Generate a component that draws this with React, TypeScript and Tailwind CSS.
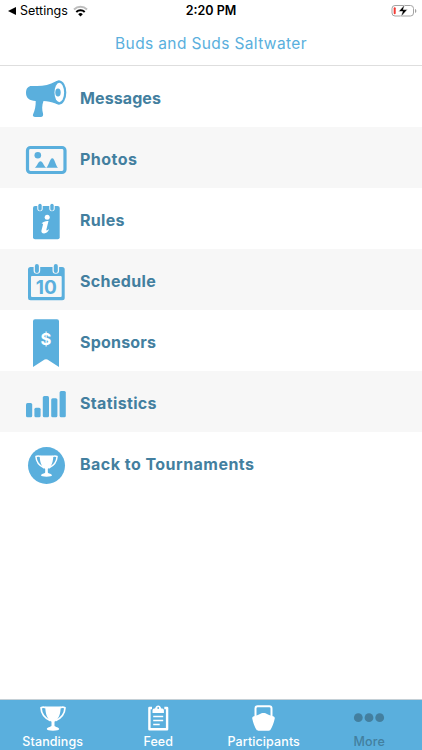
import type { ReactNode } from 'react';

const Trophy = ({ className }: { className: string }) => (
    <svg className={className} viewBox="0 0 26 25" fill="currentColor">
        <path d="M5.300.6h15.400c0 7-1.700 12.500-6.200 15.200v4c.6 1.400 4.700 1.300 4.700 3.300 0 1.200-2.500 1.600-6.200 1.600s-6.200-.4-6.200-1.600c0-2 4.100-1.900 4.700-3.300v-4C7 13.100 5.300 7.600 5.300.6z" />
        <path
            d="M6 1.600C4 1 2.500 1 1 1.700 1.200 7 3.500 11.500 10.500 14.800M20 1.600c2-.6 3.500-.6 5 .1C24.800 7 22.500 11.500 15.500 14.800"
            fill="none"
            stroke="currentColor"
            strokeWidth="1.700"
            strokeLinejoin="round"
        />
    </svg>
);

const Icon = ({ children }: { children: ReactNode }) => (
    <svg className="h-[61px] w-[52px] shrink-0 text-[#5aafdd]" viewBox="20 0 52 61" fill="currentColor">
        {children}
    </svg>
);

const MessagesIcon = () => (
    <Icon>
        <path d="M31.500 20H37c7 0 13-1.500 18.500-4.500 1.500-.8 2.500-1 4-1v24c-1.500 0-2.500-.3-4-1C51.500 36 47.500 35.200 43.500 35c-1.700 4.500-1.600 8.500-.5 12.500.5 2.200-.3 3.500-2.200 3.500H35.200c-2 0-2.900-1.400-2-3 1.600-3.500 2.700-8.100 2.500-13C29.500 34.800 26 32 26 27s2.500-7 5.500-7z" />
        <ellipse cx="59.300" cy="26.500" rx="7" ry="12.100" />
        <ellipse cx="59.300" cy="26.500" rx="4.800" ry="9.700" fill="white" />
        <ellipse cx="58" cy="26.500" rx="2.700" ry="4" />
    </Icon>
);

const PhotosIcon = () => (
    <Icon>
        <rect x="27.500" y="20.500" width="37.500" height="25" rx="3" fill="none" stroke="currentColor" strokeWidth="3.200" />
        <circle cx="37.800" cy="28.200" r="3.300" />
        <path d="M34.800 40.700c2.500-1.700 3.500-6.500 5.700-6.500s3.200 4.800 5.700 6.500zM46.300 40.700c2.700-2.200 3.500-9.500 6-9.500s3.200 7.300 5.700 9.500z" />
    </Icon>
);

const RulesIcon = () => (
    <Icon>
        <rect x="33" y="18" width="26.700" height="33.200" rx="2" />
        <path d="M37.300 17v3.500a2.700 2.700 0 0 0 5.400 0V17zM49.300 17v3.500a2.700 2.700 0 0 0 5.400 0V17z" fill="white" />
        <rect x="38.300" y="15.700" width="3.400" height="7" rx="1.700" />
        <rect x="50.300" y="15.700" width="3.400" height="7" rx="1.700" />
        <circle cx="47.200" cy="29.300" r="2.500" fill="white" />
        <path
            d="M41.500 35.500c1.500-1.700 4.800-3 7-2.500L46.400 41.500c-.4 1.500 1 1.200 2.700-.4-.6 2.500-2.900 4.400-5 4.400-2.200 0-3.100-1.300-2.600-3.200l1.500-5.800c.2-.8-.5-1-1.500-1z"
            fill="white"
        />
    </Icon>
);

const ScheduleIcon = () => (
    <Icon>
        <rect x="28" y="18" width="36.700" height="33.300" rx="2.500" />
        <rect x="31" y="27" width="30.700" height="21" rx="1" fill="#f7f7f7" />
        <path d="M33.600 16v5.500a3.300 3.300 0 0 0 6.600 0V16zM52.500 16v5.500a3.300 3.300 0 0 0 6.600 0V16z" fill="#f7f7f7" />
        <rect x="34.900" y="15" width="4" height="9" rx="2" />
        <rect x="53.800" y="15" width="4" height="9" rx="2" />
        <text x="46.300" y="44.500" textAnchor="middle" className="font-['Inter',sans-serif] text-[19px] font-bold">
            10
        </text>
    </Icon>
);

const SponsorsIcon = () => (
    <Icon>
        <path d="M35 9.300h22a2 2 0 0 1 2 2V57l-11.600-7.400a2.500 2.500 0 0 0-2.800 0L33 57V11.300a2 2 0 0 1 2-2z" />
        <text x="46" y="35.300" textAnchor="middle" fill="white" className="font-['Inter',sans-serif] text-[16.500px] font-bold">
            $
        </text>
    </Icon>
);

const StatisticsIcon = () => (
    <Icon>
        <rect x="26" y="32" width="6.200" height="14.200" rx="1.500" />
        <rect x="34.400" y="36.700" width="6.200" height="9.500" rx="1.500" />
        <rect x="42.800" y="25" width="6.200" height="21.200" rx="1.500" />
        <rect x="51.200" y="27.300" width="6.200" height="18.900" rx="1.500" />
        <rect x="59.600" y="20" width="6.200" height="26.200" rx="1.500" />
    </Icon>
);

const BackIcon = () => (
    <div className="flex h-[61px] w-[52px] shrink-0 items-center justify-center pt-[6px]">
        <div className="flex size-[37px] items-center justify-center rounded-full bg-[#5aafdd]">
            <Trophy className="h-[22px] w-[23px] text-white" />
        </div>
    </div>
);

const items = [
    { label: 'Messages', icon: <MessagesIcon />, tracking: 'tracking-[0.1px]' },
    { label: 'Photos', icon: <PhotosIcon />, tracking: 'tracking-[0.450px]' },
    { label: 'Rules', icon: <RulesIcon />, tracking: 'tracking-[0.3px]' },
    { label: 'Schedule', icon: <ScheduleIcon />, tracking: 'tracking-[0.350px]' },
    { label: 'Sponsors', icon: <SponsorsIcon />, tracking: 'tracking-[0.2px]' },
    { label: 'Statistics', icon: <StatisticsIcon />, tracking: 'tracking-[0.350px]' },
    { label: 'Back to Tournaments', icon: <BackIcon />, tracking: 'tracking-[0.470px]' },
];

const FeedIcon = () => (
    <svg className="h-[26px] w-[22px]" viewBox="0 0 22 26" fill="none" stroke="currentColor">
        <path d="M5 3H2.400v21.300h17.700V3h-2.800" strokeWidth="2.400" strokeLinejoin="round" />
        <path d="M5.500 8V5.200c0-1.200 1-1.700 2.500-1.700.5 0 .5-3 3.200-3s2.700 3 3.200 3c1.500 0 2.500.5 2.500 1.700V8z" fill="currentColor" stroke="none" />
        <circle cx="11.200" cy="3" r="0.900" fill="#5aafdd" stroke="none" />
        <path d="M6.200 11.500h10M6.200 15.500h10M6.200 19.500h6.500" strokeWidth="1.600" />
    </svg>
);

const ParticipantsIcon = () => (
    <svg className="h-[26px] w-[24px]" viewBox="0 0 24 26" fill="currentColor">
        <path d="M3.500 12V3.500c0-1.300.8-2.200 2.200-2.200h11.600c1.400 0 2.200.9 2.200 2.200V12" fill="none" stroke="currentColor" strokeWidth="2" />
        <path d="M11.500 8c3 0 4.500 2.100 9.500 3.200 1.500.4 2 1.400 1.700 2.600-.8 4-2.500 8.600-4.200 11-.5.700-1 .9-1.800.9H6.300c-.8 0-1.300-.2-1.800-.9-1.700-2.400-3.400-7-4.200-11-.3-1.200.2-2.200 1.700-2.600C7 10.100 8.500 8 11.500 8z" />
    </svg>
);

const MoreIcon = () => (
    <svg className="h-[26px] w-[32px]" viewBox="0 0 32 26" fill="currentColor">
        <circle cx="5.300" cy="12.700" r="4.400" />
        <circle cx="16" cy="12.700" r="4.400" />
        <circle cx="26.700" cy="12.700" r="4.400" />
    </svg>
);

const tabs = [
    { label: 'Standings', icon: <Trophy className="h-[25px] w-[26px]" />, className: 'text-white' },
    { label: 'Feed', icon: <FeedIcon />, className: 'text-white' },
    { label: 'Participants', icon: <ParticipantsIcon />, className: 'text-white' },
    { label: 'More', icon: <MoreIcon />, className: 'text-[#437f9f]' },
];

const StatusBar = () => (
    <div className="grid h-[22px] grid-cols-3 items-center text-black">
        <div className="flex items-center pl-[8px]">
            <svg className="h-[8px] w-[8px]" viewBox="0 0 8 8">
                <path d="M0 4 8 0v8z" />
            </svg>
            <span className="ml-[4px] text-[12.500px]">Settings</span>
            <svg className="ml-[5px] h-[12px] w-[15px]" viewBox="0 0 15 12" fill="none" stroke="black">
                <path d="M1 4.400a9.500 9.500 0 0 1 13 0" strokeWidth="2" stroke="#bdbdbd" />
                <path d="M3.300 7a6 6 0 0 1 8.400 0" strokeWidth="2" />
                <path d="M7.500 11.500 5.200 9.300a3.200 3.200 0 0 1 4.600 0z" fill="black" stroke="none" />
            </svg>
        </div>
        <span className="text-center text-[12.500px] font-semibold">2:20 PM</span>
        <div className="flex justify-end pr-[5px]">
            <svg className="h-[14px] w-[26px]" viewBox="0 0 26 14">
                <rect x="1" y="1.500" width="21.500" height="10.500" rx="3" fill="none" stroke="#a3a3a3" />
                <rect x="2.700" y="3.200" width="2" height="7" rx="1" fill="#f23b35" />
                <path d="M24 5v3.800c1-.2 1.300-1 1.300-1.900S25 5.200 24 5z" fill="#a3a3a3" />
                <path d="M13.800.5 7.500 7.500h4L9.800 13l6.700-7.400h-4.200z" fill="black" stroke="white" strokeWidth="0.600" />
            </svg>
        </div>
    </div>
);

const App = () => {
    return (
        <div className="flex h-[750px] w-[422px] flex-col overflow-hidden bg-white font-['Inter',sans-serif]">
            <header className="flex h-[66px] shrink-0 flex-col border-b border-[#dedede]">
                <StatusBar />
                <h1 className="text-center text-[15.500px] leading-[43px] tracking-[0.370px] text-[#5aafdd]">Buds and Suds Saltwater</h1>
            </header>
            <nav className="flex grow flex-col">
                {items.map((item) => (
                    <a key={item.label} className="flex h-[61px] items-center pl-5 even:bg-[#f7f7f7]">
                        {item.icon}
                        <span className={`ml-2 pt-[3px] text-[16px] leading-6 font-bold whitespace-nowrap text-[#437f9f] ${item.tracking}`}>
                            {item.label}
                        </span>
                    </a>
                ))}
            </nav>
            <footer className="grid h-[51px] shrink-0 grid-cols-4 border-t border-[#c5d0d6] bg-[#5aafdd]">
                {tabs.map((tab) => (
                    <button key={tab.label} className={`flex flex-col items-center pt-[5px] ${tab.className}`}>
                        <span className="flex h-[26px] items-center">{tab.icon}</span>
                        <span className="mt-[2px] text-[12.500px] leading-[17px] font-medium tracking-[0.1px]">{tab.label}</span>
                    </button>
                ))}
            </footer>
        </div>
    );
};

export default App;
